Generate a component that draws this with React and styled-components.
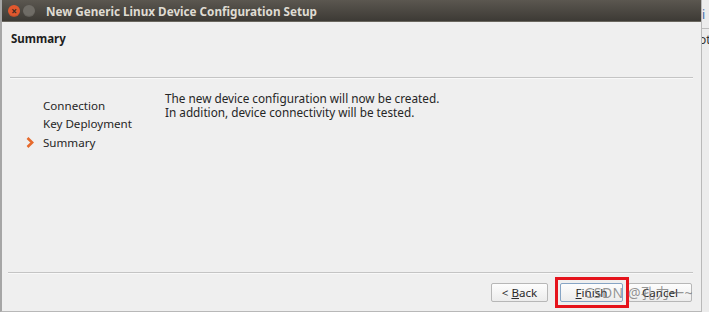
import styled, { createGlobalStyle } from 'styled-components'

const GlobalStyle = createGlobalStyle`
  html, body {
    margin: 0;
    padding: 0;
    width: 709px;
    height: 312px;
    overflow: hidden;
    background: #e9e9e9;
    font-family: "Noto Sans", "Open Sans", sans-serif;
  }
`

const steps = ['Connection', 'Key Deployment', 'Summary']

const App = () => {
    return (
        <>
            <GlobalStyle />
            <Screen>
                <Window>
                    <TitleBar>
                        <WinButton $color="#e2582e" $glyph="×" />
                        <WinButton $color="#6f6c66" $glyph="" />
                        <Title>New Generic Linux Device Configuration Setup</Title>
                    </TitleBar>
                    <Header>
                        <PageTitle>Summary</PageTitle>
                    </Header>
                    <Rule $left={10} />
                    <Content>
                        <StepList>
                            {steps.map((step) => (
                                <Step key={step}>
                                    <Marker>
                                        {step === 'Summary' && (
                                            <svg width="8" height="11" viewBox="0 0 8 11">
                                                <path d="M1.5 1 L6.2 5.5 L1.5 10" fill="none" stroke="#e66a2c" strokeWidth="2.6" strokeLinejoin="miter" />
                                            </svg>
                                        )}
                                    </Marker>
                                    {step}
                                </Step>
                            ))}
                        </StepList>
                        <Message>
                            The new device configuration will now be created.<br />
                            In addition, device connectivity will be tested.
                        </Message>
                    </Content>
                    <Rule $left={8} />
                    <ButtonBar>
                        <Button $width={57}>&lt;&nbsp;<u>B</u>ack</Button>
                        <Highlight>
                            <Button $width={63} $focused><u>F</u>inish</Button>
                        </Highlight>
                        <Button $width={64}>Cancel</Button>
                        <Watermark>CSDN @孔力一~</Watermark>
                    </ButtonBar>
                </Window>
                <Behind>
                    <BehindText $color="#3b6aa8">li</BehindText>
                    <BehindLine />
                    <BehindText $color="#333">ot</BehindText>
                </Behind>
            </Screen>
        </>
    )
}

const Screen = styled.div`
display: flex;
width: 709px;
height: 312px;
`

const Window = styled.div`
width: 699px;
height: 311px;
border-left: 2px solid #a6a6a6;
border-bottom: 1px solid #b8b8b8;
background: #efefef;
display: flex;
flex-direction: column;
`

const TitleBar = styled.div`
height: 22px;
flex-shrink: 0;
display: flex;
align-items: center;
padding-left: 6px;
gap: 3px;
background: linear-gradient(#5b5750, #3d3a35);
border-bottom: 1px solid #6a675f;
box-sizing: border-box;
`

const WinButton = styled.div`
width: 12px;
height: 12px;
border-radius: 50%;
background: radial-gradient(circle at 50% 35%, ${p => p.$color}, ${p => p.$color} 60%, #2e2c29 120%);
color: #3a2a22;
font-size: 10px;
line-height: 12px;
text-align: center;
font-weight: bold;
&::after { content: "${p => p.$glyph}"; }
`

const Title = styled.div`
margin-left: 8px;
color: #dfdbd2;
font-weight: bold;
font-size: 11.7px;
white-space: nowrap;
`

const Header = styled.div`
height: 55px;
flex-shrink: 0;
padding: 9px 0 0 9px;
box-sizing: border-box;
`

const PageTitle = styled.div`
font-weight: bold;
font-size: 11.5px;
color: #1d1d1d;
`

const Rule = styled.div`
height: 1px;
flex-shrink: 0;
margin: 0 8px 0 ${p => p.$left - 2}px;
background: #c4c4c4;
border-bottom: 1px solid #f8f8f8;
`

const Content = styled.div`
flex: 1;
display: flex;
padding-top: 12px;
`

const StepList = styled.div`
width: 163px;
padding-top: 6px;
padding-left: 24px;
box-sizing: border-box;
display: flex;
flex-direction: column;
gap: 2px;
`

const Step = styled.div`
display: flex;
align-items: center;
height: 16.5px;
font-size: 11.6px;
color: #262626;
`

const Marker = styled.div`
width: 17px;
display: flex;
align-items: center;
`

const Message = styled.div`
font-size: 11.75px;
line-height: 14px;
color: #262626;
`

const ButtonBar = styled.div`
height: 37px;
flex-shrink: 0;
display: flex;
justify-content: flex-end;
align-items: flex-start;
padding: 9px 9px 0 0;
box-sizing: border-box;
position: relative;
`

const Button = styled.div`
height: 19px;
width: ${p => p.$width}px;
box-sizing: border-box;
border: 1px solid ${p => (p.$focused ? '#86a4c4' : '#b7b7b7')};
border-radius: 2px;
background: linear-gradient(#fdfdfd, #ececec);
display: flex;
align-items: center;
justify-content: center;
font-size: 11.6px;
color: #2a2a2a;
white-space: nowrap;
`

const Highlight = styled.div`
position: relative;
margin: 0 5px 0 12px;
&::after {
  content: "";
  position: absolute;
  left: -5px;
  right: -6px;
  top: -6px;
  bottom: -6px;
  border: 3px solid #e5131c;
  pointer-events: none;
}
`

const Watermark = styled.div`
position: absolute;
right: 8px;
top: 8px;
font-size: 14px;
letter-spacing: 0.5px;
color: rgba(105, 105, 105, 0.7);
pointer-events: none;
white-space: nowrap;
font-family: "Noto Sans", "Noto Sans CJK SC", sans-serif;
`

const Behind = styled.div`
flex: 1;
background: #ececec;
border-left: 1px solid #b9b9b9;
display: flex;
flex-direction: column;
padding-top: 8px;
overflow: hidden;
`

const BehindText = styled.div`
font-size: 12px;
color: ${p => p.$color};
margin-left: -3px;
line-height: 14px;
`

const BehindLine = styled.div`
height: 1px;
background: #bdbdbd;
margin: 6px 0 4px;
`

export default App
